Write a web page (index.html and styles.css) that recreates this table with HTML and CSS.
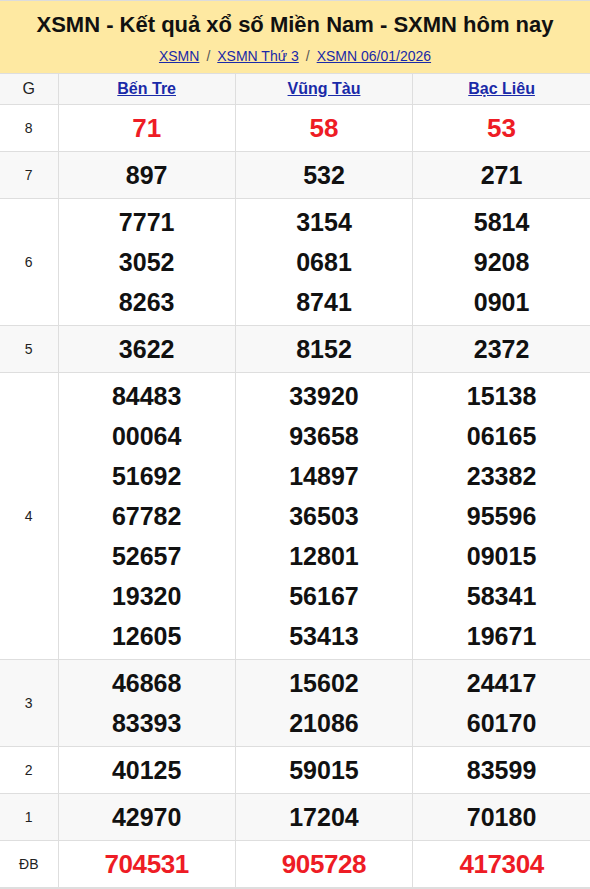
FILE: index.html
```html
<!DOCTYPE html>
<html lang="vi">
<head>
<meta charset="utf-8">
<title>XSMN</title>
<link rel="stylesheet" href="styles.css">
</head>
<body>
<div class="box">
  <div class="head">
    <h1 class="title">XSMN - Kết quả xổ số Miền Nam - SXMN hôm nay</h1>
    <div class="crumbs">
      <a href="#">XSMN</a><span class="sep">/</span><a href="#">XSMN Thứ 3</a><span class="sep">/</span><a href="#">XSMN 06/01/2026</a>
    </div>
  </div>
  <table class="res">
    <colgroup><col class="c-g"><col class="c-p"><col class="c-p"><col class="c-p"></colgroup>
    <thead>
      <tr><th class="lbl">G</th><th><a href="#">Bến Tre</a></th><th><a href="#">Vũng Tàu</a></th><th><a href="#">Bạc Liêu</a></th></tr>
    </thead>
    <tbody>
      <tr><td class="lbl">8</td><td><div class="n red">71</div></td><td><div class="n red">58</div></td><td><div class="n red">53</div></td></tr>
      <tr class="alt"><td class="lbl">7</td><td><div class="n">897</div></td><td><div class="n">532</div></td><td><div class="n">271</div></td></tr>
      <tr><td class="lbl">6</td>
        <td><div class="n">7771</div><div class="n">3052</div><div class="n">8263</div></td>
        <td><div class="n">3154</div><div class="n">0681</div><div class="n">8741</div></td>
        <td><div class="n">5814</div><div class="n">9208</div><div class="n">0901</div></td></tr>
      <tr class="alt"><td class="lbl">5</td><td><div class="n">3622</div></td><td><div class="n">8152</div></td><td><div class="n">2372</div></td></tr>
      <tr><td class="lbl">4</td>
        <td><div class="n">84483</div><div class="n">00064</div><div class="n">51692</div><div class="n">67782</div><div class="n">52657</div><div class="n">19320</div><div class="n">12605</div></td>
        <td><div class="n">33920</div><div class="n">93658</div><div class="n">14897</div><div class="n">36503</div><div class="n">12801</div><div class="n">56167</div><div class="n">53413</div></td>
        <td><div class="n">15138</div><div class="n">06165</div><div class="n">23382</div><div class="n">95596</div><div class="n">09015</div><div class="n">58341</div><div class="n">19671</div></td></tr>
      <tr class="alt"><td class="lbl">3</td>
        <td><div class="n">46868</div><div class="n">83393</div></td>
        <td><div class="n">15602</div><div class="n">21086</div></td>
        <td><div class="n">24417</div><div class="n">60170</div></td></tr>
      <tr><td class="lbl">2</td><td><div class="n">40125</div></td><td><div class="n">59015</div></td><td><div class="n">83599</div></td></tr>
      <tr class="alt"><td class="lbl">1</td><td><div class="n">42970</div></td><td><div class="n">17204</div></td><td><div class="n">70180</div></td></tr>
      <tr><td class="lbl">ĐB</td><td><div class="n red db">704531</div></td><td><div class="n red db">905728</div></td><td><div class="n red db">417304</div></td></tr>
    </tbody>
  </table>
  <div class="tabs">
    <span class="tab on"></span><span class="tab"></span><span class="tab"></span><span class="tab"></span><span class="tab"></span><span class="tab"></span><span class="tab"></span><span class="tab"></span><span class="tab"></span><span class="tab"></span><span class="tab"></span><span class="tab"></span>
  </div>
</div>
</body>
</html>
```

FILE: styles.css
```css
html, body { margin: 0; padding: 0; background: #fff; }
body { font-family: "Liberation Sans", Arial, sans-serif; color: #111; }
.box { border-top: 1px solid #dcdcdc; }
.head {
  background: #fee9a2;
  height: 72px;
  box-sizing: border-box;
  padding-top: 10px;
  text-align: center;
}
.title {
  margin: 0;
  font-size: 22px;
  font-weight: bold;
  line-height: 28px;
  color: #111;
}
.crumbs {
  margin-top: 9px;
  font-size: 14px;
  line-height: 17px;
  color: #555;
}
.crumbs a { color: #1a2aa8; text-decoration: underline; }
.crumbs .sep { margin: 0 7px; color: #555; }
.res {
  width: 100%;
  border-collapse: collapse;
  table-layout: fixed;
}
.c-g { width: 58px; }
.res th, .res td {
  border: 1px solid #dedede;
  text-align: center;
  vertical-align: middle;
  padding: 3px 0;
}
.res tr > :first-child { border-left: 0; }
.res tr > :last-child { border-right: 0; }
.res thead th {
  background: #f7f7f7;
  height: 31px;
  padding: 0;
  box-sizing: border-box;
  font-size: 16px;
  font-weight: bold;
}
.res thead th a { color: #1a2aa8; text-decoration: underline; }
.res thead th.lbl { font-weight: normal; }
.lbl { font-size: 14px; color: #222; font-weight: normal; }
.alt td { background: #f8f8f8; }
.n {
  font-size: 25px;
  font-weight: bold;
  line-height: 40px;
  color: #111;
}
.red { color: #ee1c25; font-size: 26px; }
.db { letter-spacing: -0.4px; }
.tabs {
  display: flex;
  height: 2px;
  border-top: 1px solid #dedede;
}
.tab { width: 47px; border-left: 1px solid #e4e4e4; }
.tab.on { width: 45px; border-left: 0; background: #e01010; }
```
